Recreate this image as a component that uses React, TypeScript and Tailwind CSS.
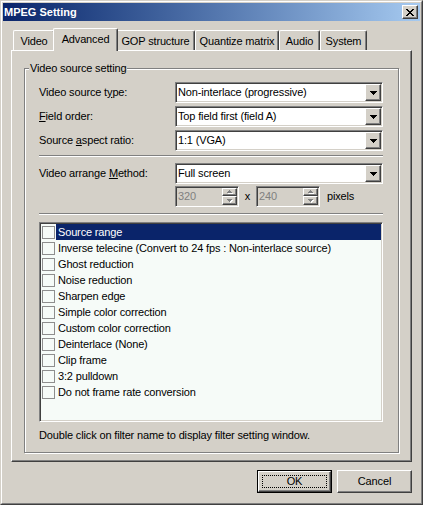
import React from 'react';

// Win2000 classic 3D edges
const raised =
  'border border-t-white border-l-white border-r-[#404040] border-b-[#404040] shadow-[inset_-1px_-1px_0_#808080]';
const sunken =
  'border border-t-[#808080] border-l-[#808080] border-r-white border-b-white shadow-[inset_1px_1px_0_#404040,inset_-1px_-1px_0_#d4d0c8]';

const DownArrow = ({ color = '#000' }: { color?: string }) => (
  <svg width="7" height="4" shapeRendering="crispEdges">
    <path d="M0 0h7v1H0zM1 1h5v1H1zM2 2h3v1H2zM3 3h1v1H3z" fill={color} />
  </svg>
);

const SmallArrow = ({ up }: { up?: boolean }) => (
  <svg width="6" height="4" shapeRendering="crispEdges">
    {up ? (
      <>
        <path d="M3 1h1v1H3zM2 2h3v1H2zM1 3h5v1H1z" fill="#fff" />
        <path d="M2 0h1v1H2zM1 1h3v1H1zM0 2h5v1H0z" fill="#808080" />
      </>
    ) : (
      <>
        <path d="M1 1h5v1H1zM2 2h3v1H2zM3 3h1v1H3z" fill="#fff" />
        <path d="M0 0h5v1H0zM1 1h3v1H1zM2 2h1v1H2z" fill="#808080" />
      </>
    )}
  </svg>
);

const Combo = ({ value }: { value: string }) => (
  <div className={`w-[208px] h-[21px] bg-white flex p-px ${sunken}`}>
    <span className="flex-1 pl-[1px] leading-[17px] whitespace-nowrap overflow-hidden">{value}</span>
    <div className={`w-[16px] h-[17px] bg-[#d4d0c8] flex items-center justify-center ${raised}`}>
      <DownArrow />
    </div>
  </div>
);

const Spin = ({ value }: { value: string }) => (
  <div className={`w-[64px] h-[21px] bg-[#d4d0c8] flex p-px ${sunken}`}>
    <span className="flex-1 pl-[1px] leading-[17px] text-[#808080]">{value}</span>
    <div className="w-[15px] flex flex-col">
      <div className={`h-[8px] flex items-center justify-center ${raised}`}>
        <SmallArrow up />
      </div>
      <div className={`h-[9px] flex items-center justify-center ${raised}`}>
        <SmallArrow />
      </div>
    </div>
  </div>
);

const Separator = () => (
  <div className="ml-[14px] w-[344px] h-[2px] border-t border-t-[#808080] border-b border-b-white" />
);

const tabs = [
  { name: 'Video', w: 'w-[42px]' },
  { name: 'Advanced', w: 'w-[65px]', active: true },
  { name: 'GOP structure', w: 'w-[79px]' },
  { name: 'Quantize matrix', w: 'w-[84px]' },
  { name: 'Audio', w: 'w-[41px]' },
  { name: 'System', w: 'w-[47px]' },
];

const filters = [
  'Source range',
  'Inverse telecine (Convert to 24 fps : Non-interlace source)',
  'Ghost reduction',
  'Noise reduction',
  'Sharpen edge',
  'Simple color correction',
  'Custom color correction',
  'Deinterlace (None)',
  'Clip frame',
  '3:2 pulldown',
  'Do not frame rate conversion',
];

export default function App() {
  return (
    <div className="w-[423px] h-[505px] bg-[#d4d0c8] border border-t-[#d4d0c8] border-l-[#d4d0c8] border-r-[#404040] border-b-[#404040] font-['Liberation_Sans',Arial,sans-serif] text-[11px] tracking-[-0.15px] text-black leading-[13px] select-none">
      <div className="h-full border border-t-white border-l-white border-r-[#808080] border-b-[#808080] p-px flex flex-col">
        {/* title bar */}
        <div className="h-[18px] flex items-center justify-between bg-linear-to-r from-[#0a246a] to-[#a6caf0] pl-[1px] pr-[2px]">
          <span className="text-white font-bold text-[11px] tracking-normal">MPEG Setting</span>
          <div className={`w-[16px] h-[14px] bg-[#d4d0c8] flex items-center justify-center ${raised}`}>
            <svg width="8" height="7" shapeRendering="crispEdges">
              <path
                d="M0 0h2v1H0zM6 0h2v1H6zM1 1h2v1H1zM5 1h2v1H5zM2 2h4v1H2zM3 3h2v1H3zM2 4h4v1H2zM1 5h2v1H1zM5 5h2v1H5zM0 6h2v1H0zM6 6h2v1H6z"
                fill="#000"
              />
            </svg>
          </div>
        </div>

        <div className="flex-1 px-[8px] pt-[7px] flex flex-col">
          {/* tabs */}
          <div className="h-[22px] flex items-end pl-[2px]">
            {tabs.map(t =>
              t.active ? (
                <div
                  key={t.name}
                  className={`${t.w} h-[23px] -mx-[2px] -mb-px relative z-10 bg-[#d4d0c8] border-t border-l border-r border-t-white border-l-white border-r-[#404040] shadow-[inset_-1px_0_0_#808080] rounded-t-[2px] flex justify-center pt-[4px]`}
                >
                  {t.name}
                </div>
              ) : (
                <div
                  key={t.name}
                  className={`${t.w} h-[20px] bg-[#d4d0c8] border-t border-l border-r border-t-white border-l-white border-r-[#404040] shadow-[inset_-1px_0_0_#808080] rounded-t-[2px] flex justify-center pt-[4px]`}
                >
                  {t.name}
                </div>
              )
            )}
          </div>

          {/* tab page */}
          <div className="h-[412px] border border-t-white border-l-white border-r-[#404040] border-b-[#404040] shadow-[inset_-1px_-1px_0_#808080] pl-[12px] pt-[17px]">
            <div className="w-[375px] h-[385px] border border-[#808080] shadow-[inset_1px_1px_0_white,1px_1px_0_white] flex flex-col">
              <div className="-mt-[7px] ml-[4px] px-[1px] w-fit bg-[#d4d0c8] leading-[13px]">
                Video source setting
              </div>

              <div className="mt-[7px] flex flex-col gap-[3px]">
                <div className="flex items-center pl-[14px]">
                  <span className="w-[136px]">
                    Video source t<u>y</u>pe:
                  </span>
                  <Combo value="Non-interlace (progressive)" />
                </div>
                <div className="flex items-center pl-[14px]">
                  <span className="w-[136px]">
                    <u>F</u>ield order:
                  </span>
                  <Combo value="Top field first (field A)" />
                </div>
                <div className="flex items-center pl-[14px]">
                  <span className="w-[136px]">
                    Source <u>a</u>spect ratio:
                  </span>
                  <Combo value="1:1 (VGA)" />
                </div>
              </div>

              <div className="mt-[4px]">
                <Separator />
              </div>

              <div className="mt-[6px] flex items-center pl-[14px]">
                <span className="w-[136px]">
                  Video arrange <u>M</u>ethod:
                </span>
                <Combo value="Full screen" />
              </div>

              <div className="mt-[2px] flex items-center pl-[150px]">
                <Spin value="320" />
                <span className="w-[17px] text-center">x</span>
                <Spin value="240" />
                <span className="ml-[7px]">pixels</span>
              </div>

              <div className="mt-[6px]">
                <Separator />
              </div>

              {/* filter list */}
              <div className={`mt-[7px] ml-[14px] w-[344px] h-[200px] bg-[#f6fbf8] p-px ${sunken}`}>
                {filters.map((f, i) => (
                  <div key={f} className="h-[16px] flex items-center">
                    <div className="ml-[1px] w-[13px] h-[13px] border border-[#8e8e8e] shrink-0" />
                    <span
                      className={`ml-[1px] flex-1 h-full pl-[2px] leading-[16px] whitespace-nowrap ${
                        i === 0 ? 'bg-[#0a246a] text-white' : ''
                      }`}
                    >
                      {f}
                    </span>
                  </div>
                ))}
              </div>

              <div className="mt-[7px] pl-[14px] leading-[13px]">
                Double click on filter name to display filter setting window.
              </div>
            </div>
          </div>

          {/* dialog buttons */}
          <div className="mt-[8px] flex justify-end gap-[5px]">
            <div className="w-[75px] h-[23px] border border-black">
              <div className={`h-full p-[3px] ${raised}`}>
                <div className="h-full border border-dotted border-black flex items-center justify-center">
                  OK
                </div>
              </div>
            </div>
            <div className={`w-[75px] h-[23px] flex items-center justify-center ${raised}`}>Cancel</div>
          </div>
        </div>
      </div>
    </div>
  );
}
